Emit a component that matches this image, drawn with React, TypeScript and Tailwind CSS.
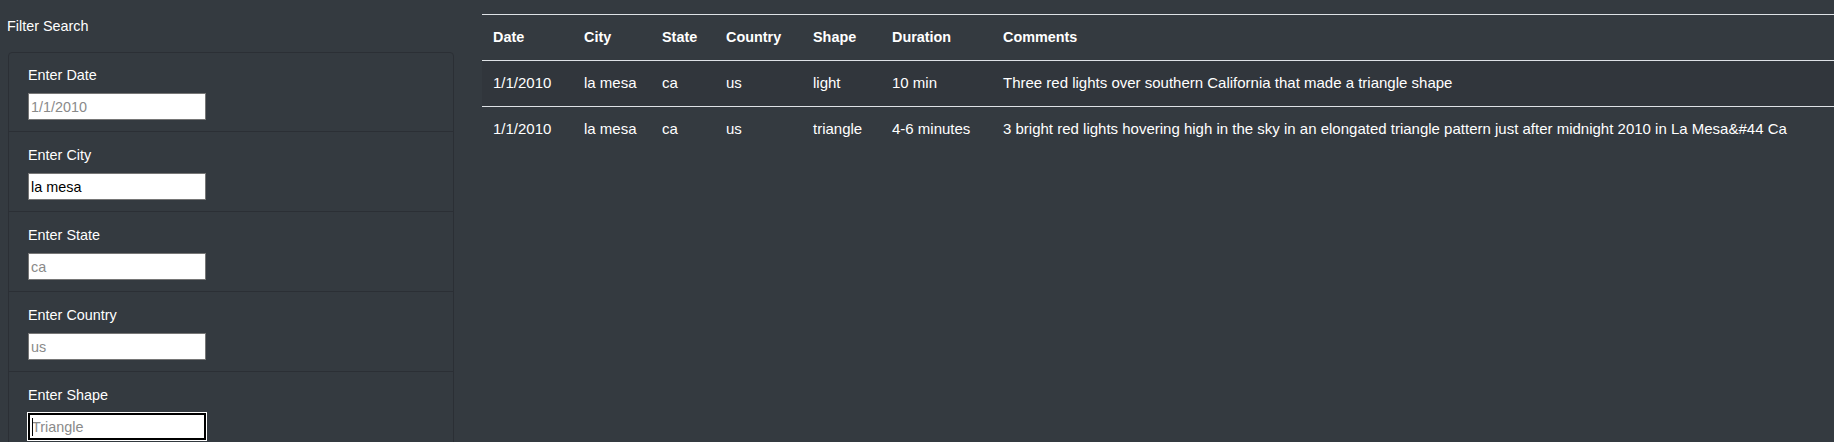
import React from "react";

const rows = [
  {
    date: "1/1/2010",
    city: "la mesa",
    state: "ca",
    country: "us",
    shape: "light",
    duration: "10 min",
    comments: "Three red lights over southern California that made a triangle shape",
  },
  {
    date: "1/1/2010",
    city: "la mesa",
    state: "ca",
    country: "us",
    shape: "triangle",
    duration: "4-6 minutes",
    comments:
      "3 bright red lights hovering high in the sky in an elongated triangle pattern just after midnight 2010 in La Mesa&#44 Ca",
  },
];

const filters = [
  { label: "Enter Date", placeholder: "1/1/2010" },
  { label: "Enter City", value: "la mesa" },
  { label: "Enter State", placeholder: "ca" },
  { label: "Enter Country", placeholder: "us" },
  { label: "Enter Shape", placeholder: "Triangle", focused: true },
];

const FilterItem = ({
  label,
  placeholder,
  value,
  focused,
}: {
  label: string;
  placeholder?: string;
  value?: string;
  focused?: boolean;
}) => (
  <li className="h-[80px] px-[19px] pt-[12px] border-t border-[#2b2f35] first:border-t-0 first:h-[78px] first:pt-[11px]">
    <label className="block h-[29px] leading-[22px]">{label}</label>
    <div className="relative w-[178px] h-[27px]">
      <input
        readOnly
        defaultValue={value}
        placeholder={placeholder}
        className={
          focused
            ? "w-full h-full bg-white text-black placeholder:text-[#8a8a8a] px-[2px] text-[14.4px] border-2 border-black outline outline-1 outline-white"
            : "w-full h-full bg-white text-black placeholder:text-[#8a8a8a] px-[2px] text-[14.4px] border border-[#767676] outline-none"
        }
      />
      {focused && (
        <span className="absolute left-[4px] top-[5px] w-px h-[18px] bg-black" />
      )}
    </div>
  </li>
);

export default function App() {
  return (
    <div
      className="w-[1834px] h-[442px] overflow-hidden bg-[#343a40] text-white text-[14.4px] flex"
      style={{ fontFamily: '"Liberation Sans", Arial, sans-serif' }}
    >
      <aside className="w-[482px] shrink-0 pl-[8px] pr-[28px]">
        <h6 className="pt-[16px] h-[52px] -ml-px leading-[20px] text-[14.4px]">
          Filter Search
        </h6>
        <ul className="border border-[#2b2f35] rounded-[4px]">
          {filters.map((f) => (
            <FilterItem key={f.label} {...f} />
          ))}
        </ul>
      </aside>
      <main className="flex-1 pt-[14px]">
        <table className="w-full border-collapse text-left">
          <thead>
            <tr className="border-t border-[#dee2e6] border-b">
              <th className="w-[91px] h-[46px] pl-[11px] font-bold">Date</th>
              <th className="w-[78px] pl-[11px] font-bold">City</th>
              <th className="w-[64px] pl-[11px] font-bold">State</th>
              <th className="w-[87px] pl-[11px] font-bold">Country</th>
              <th className="w-[79px] pl-[11px] font-bold">Shape</th>
              <th className="w-[111px] pl-[11px] font-bold">Duration</th>
              <th className="pl-[11px] font-bold">Comments</th>
            </tr>
          </thead>
          <tbody className="text-[15px]">
            {rows.map((r, i) => (
              <tr
                key={i}
                className={
                  i % 2 === 0
                    ? "bg-[#31363c] border-b border-[#dee2e6]"
                    : "border-b border-transparent"
                }
              >
                <td className="h-[46px] pl-[11px]">{r.date}</td>
                <td className="pl-[11px]">{r.city}</td>
                <td className="pl-[11px]">{r.state}</td>
                <td className="pl-[11px]">{r.country}</td>
                <td className="pl-[11px]">{r.shape}</td>
                <td className="pl-[11px]">{r.duration}</td>
                <td className="pl-[11px] whitespace-nowrap">{r.comments}</td>
              </tr>
            ))}
          </tbody>
        </table>
      </main>
    </div>
  );
}
